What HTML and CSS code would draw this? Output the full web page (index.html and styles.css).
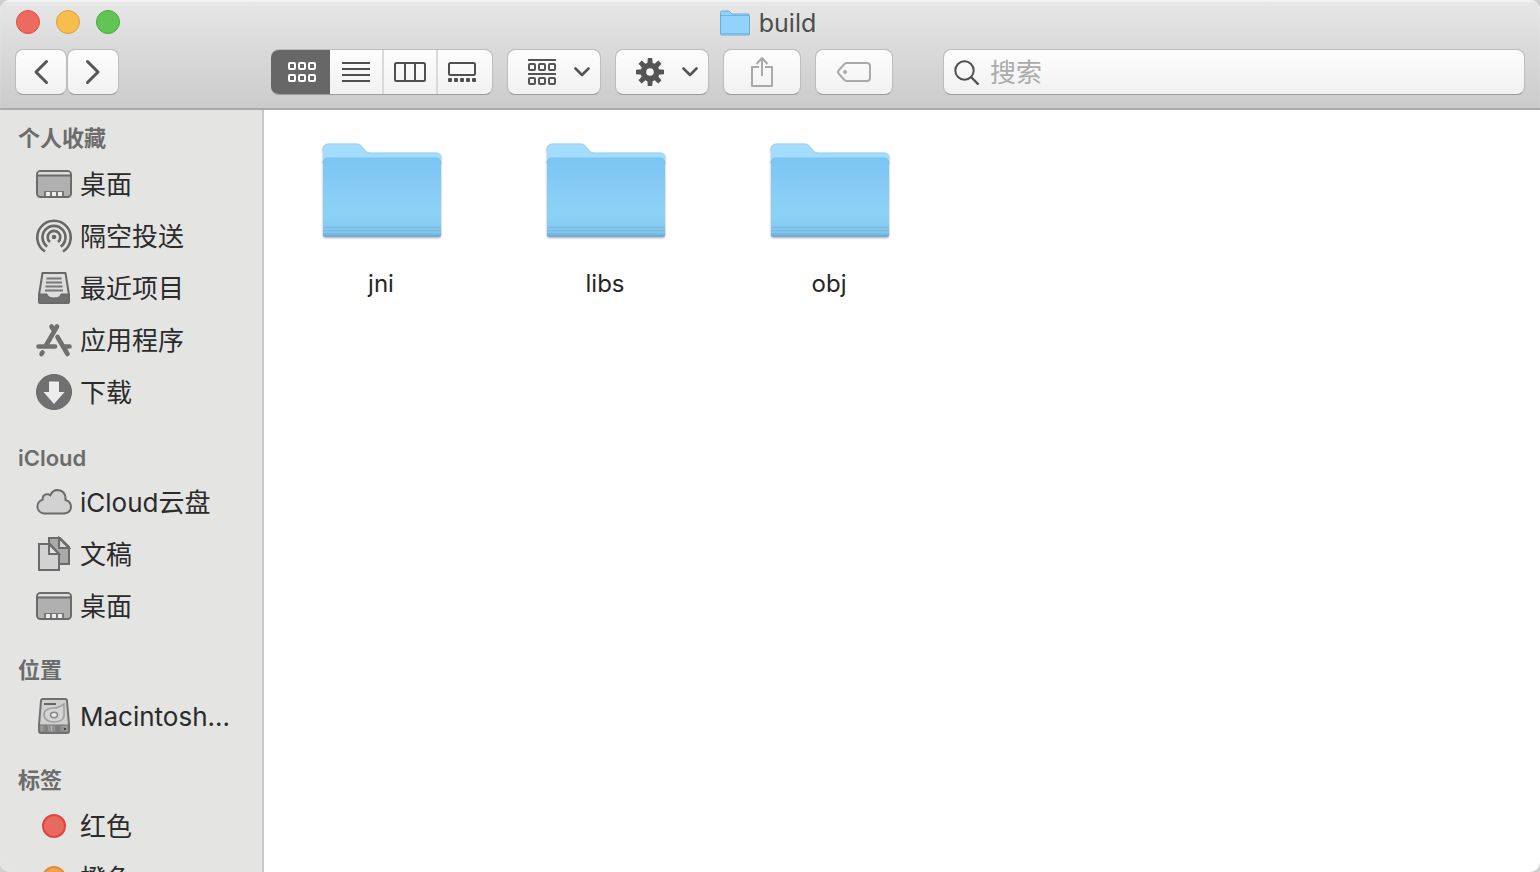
FILE: index.html
```html
<!DOCTYPE html>
<html lang="zh-CN">
<head>
<meta charset="utf-8">
<title>build</title>
<meta name="viewport" content="width=device-width, initial-scale=1">
<link rel="stylesheet" href="styles.css">
</head>
<body>
<svg class="defs" aria-hidden="true">
  <defs>
    <linearGradient id="front" x1="0" y1="0" x2="0" y2="1">
      <stop offset="0" stop-color="#7cc6f3"/><stop offset=".45" stop-color="#87cdf7"/><stop offset=".72" stop-color="#8dd2f5"/><stop offset=".86" stop-color="#85cbf0"/><stop offset="1" stop-color="#7dc2ea"/>
    </linearGradient>
    <linearGradient id="drive" x1="0" x2="1">
      <stop offset="0" stop-color="#aaa"/><stop offset=".2" stop-color="#808080"/><stop offset=".4" stop-color="#bbb"/><stop offset=".6" stop-color="#808080"/><stop offset="1" stop-color="#a5a5a5"/>
    </linearGradient>
    <symbol id="folder" viewBox="0 0 120 98">
      <path d="M1 93V6q0-5 5-5H35q3 0 5 3l3 4q2 2 5 2h66q5 0 5 5v78z" fill="#a3dcfd"/>
      <path d="M1 8q0-7 6-7H35q3 0 5 3l3 4q2 2 5 2h66q5 0 5 5" fill="none" stroke="#97d3f6" stroke-width="1"/>
      <path d="M1 20q0-5 5-5h108q5 0 5 5v71q0 3-3 3H4q-3 0-3-3z" fill="url(#front)"/>
      <path d="M1 20q0-5 5-5h108q5 0 5 5" fill="none" stroke="#7bc3ef"/>
      <path d="M1 84.500h118M1 87.500h118M1 90.500h118" stroke="#76b9e2"/>
      <path d="M1 91.500q0 2.500 3 2.500h112q3 0 3-2.500" fill="#6caedb"/>
    </symbol>
    <symbol id="desktop" viewBox="0 0 36 36">
      <rect x="1" y="5" width="34" height="26" rx="3.500" fill="#b0b0b0" stroke="#6b6b6b" stroke-width="2"/>
      <path d="M2 8q0-2 2-2h28q2 0 2 2v1H2z" fill="#dedede"/>
      <path d="M2 9.500h32" stroke="#6b6b6b" stroke-width="2"/>
      <path d="M8 30v-5h20v5z" fill="#777"/>
      <path d="M10 26h4v4h-4zM16 26h4v4h-4zM22 26h4v4h-4z" fill="#eee"/>
    </symbol>
    <symbol id="chevron" viewBox="0 0 16 10"><path d="M1.500 1.500 8 8l6.500-6.500" fill="none" stroke="#555" stroke-width="2.600" stroke-linecap="round" stroke-linejoin="round"/></symbol>
  </defs>
</svg>
<div class="window">
  <header class="titlebar">
    <div class="title-row">
      <div class="lights">
        <button class="light close" aria-label="关闭"></button>
        <button class="light minimize" aria-label="最小化"></button>
        <button class="light maximize" aria-label="缩放"></button>
      </div>
      <h1 class="title"><svg class="title-folder" viewBox="0 0 30 26" aria-hidden="true"><path d="M.5 24V2.500Q.5 1 2 1h7l3 3h16q1.500 0 1.500 1.500V24q0 1-1 1h-27q-1 0-1-1z" fill="#91d3fa" stroke="#67aedb"/><path d="M1 5.500h28" stroke="#70b6e2"/><path d="M1 23.500h28" stroke="#75bbe6"/></svg>build</h1>
    </div>
    <div class="toolbar">
      <div class="nav">
        <button class="btn nav-btn" aria-label="后退"><svg width="16" height="26" viewBox="0 0 16 26"><path d="M13.500 2.500 3 13l10.500 10.500" fill="none" stroke="#555" stroke-width="3" stroke-linecap="round" stroke-linejoin="round"/></svg></button>
        <button class="btn nav-btn" aria-label="前进"><svg width="16" height="26" viewBox="0 0 16 26"><path d="M2.500 2.500 13 13 2.500 23.500" fill="none" stroke="#555" stroke-width="3" stroke-linecap="round" stroke-linejoin="round"/></svg></button>
      </div>
      <div class="segments" role="group" aria-label="显示方式">
        <button class="segment active" aria-label="图标" aria-pressed="true"><svg width="28" height="20" viewBox="0 0 28 20"><g fill="none" stroke="#fff" stroke-width="2"><rect x="1" y="1" width="6" height="6" rx="1"/><rect x="11" y="1" width="6" height="6" rx="1"/><rect x="21" y="1" width="6" height="6" rx="1"/><rect x="1" y="13" width="6" height="6" rx="1"/><rect x="11" y="13" width="6" height="6" rx="1"/><rect x="21" y="13" width="6" height="6" rx="1"/></g></svg></button>
        <button class="segment" aria-label="列表" aria-pressed="false"><svg width="28" height="20" viewBox="0 0 28 20"><path d="M0 1h28M0 7h28M0 13h28M0 19h28" stroke="#4f4f4f" stroke-width="2"/></svg></button>
        <button class="segment" aria-label="分栏" aria-pressed="false"><svg width="32" height="20" viewBox="0 0 32 20"><g fill="none" stroke="#4f4f4f" stroke-width="2"><rect x="1" y="1" width="30" height="18" rx="1.500"/><path d="M11 1v18M21 1v18"/></g></svg></button>
        <button class="segment last" aria-label="画廊" aria-pressed="false"><svg width="28" height="20" viewBox="0 0 28 20"><rect x="1" y="1" width="26" height="12" rx="1.500" fill="none" stroke="#4f4f4f" stroke-width="2"/><g fill="#4f4f4f"><rect y="16" width="4" height="4" rx="1"/><rect x="6" y="16" width="4" height="4" rx="1"/><rect x="12" y="16" width="4" height="4" rx="1"/><rect x="18" y="16" width="4" height="4" rx="1"/><rect x="24" y="16" width="4" height="4" rx="1"/></g></svg></button>
      </div>
      <button class="btn menu-btn" aria-label="分组"><svg width="28" height="26" viewBox="0 0 28 26"><path d="M0 1h28M0 15h28" stroke="#555" stroke-width="2"/><g fill="none" stroke="#555" stroke-width="2"><rect x="1" y="5" width="6" height="6" rx="1"/><rect x="11" y="5" width="6" height="6" rx="1"/><rect x="21" y="5" width="6" height="6" rx="1"/><rect x="1" y="19" width="6" height="6" rx="1"/><rect x="11" y="19" width="6" height="6" rx="1"/><rect x="21" y="19" width="6" height="6" rx="1"/></g></svg><svg width="16" height="10"><use href="#chevron"/></svg></button>
      <button class="btn menu-btn" aria-label="操作"><svg width="28" height="28" viewBox="-14 -14 28 28"><g fill="#555"><path id="tooth" d="M-2.700-8-2.200-14H2.200L2.700-8V8L2.200 14H-2.200L-2.700 8z"/><use href="#tooth" transform="rotate(45)"/><use href="#tooth" transform="rotate(90)"/><use href="#tooth" transform="rotate(135)"/><circle r="9.500"/></g><circle r="3.800" fill="#f6f6f6"/></svg><svg width="16" height="10"><use href="#chevron"/></svg></button>
      <button class="btn action-btn" aria-label="共享"><svg width="22" height="30" viewBox="0 0 22 30"><path d="M8 10H1v19h20V10h-7M11 19V1.500M5.500 7 11 1l5.500 6" fill="none" stroke="#a9a9a9" stroke-width="2" stroke-linejoin="round" stroke-linecap="butt"/></svg></button>
      <button class="btn action-btn" aria-label="编辑标签"><svg width="34" height="20" viewBox="0 0 34 20"><path d="M10 1h20q3 0 3 3v12q0 3-3 3H10q-1.500 0-2.500-1L2 12q-2-2 0-4L7.500 2q1-1 2.500-1z" fill="none" stroke="#a9a9a9" stroke-width="2"/><circle cx="8" cy="10" r="2" fill="#a9a9a9"/></svg></button>
      <label class="search"><svg width="26" height="26" viewBox="0 0 26 26" aria-hidden="true"><circle cx="10.500" cy="11.500" r="9.200" fill="none" stroke="#505050" stroke-width="2"/><path d="m17 18 7.500 7.500" stroke="#505050" stroke-width="2.400"/></svg><input type="search" placeholder="搜索" aria-label="搜索"></label>
    </div>
  </header>
  <div class="body">
    <nav class="sidebar" aria-label="边栏">
      <section>
        <h2>个人收藏</h2>
        <ul>
          <li><a href="#"><svg class="icon"><use href="#desktop"/></svg>桌面</a></li>
          <li><a href="#"><svg class="icon" viewBox="0 0 36 36"><g fill="none" stroke="#686868" stroke-width="2.600"><path d="M9 33.500A16.700 16.700 0 1 1 27 33.500"/><path d="M11.200 28.600A11.500 11.500 0 1 1 24.800 28.600"/><path d="M14 24A6.300 6.300 0 1 1 22 24"/></g><circle cx="18" cy="19" r="2.300" fill="#686868"/></svg>隔空投送</a></li>
          <li><a href="#"><svg class="icon" viewBox="0 0 36 36"><path d="M6.500 3h23L33 25v7q0 1-1 1H4q-1 0-1-1v-7z" fill="#ddd" stroke="#686868" stroke-width="2" stroke-linejoin="round"/><path d="M10.500 8.500h15M10 12.500h16M9.500 16.500h17M9 20.500h18" stroke="#777" stroke-width="2"/><path d="M3 24h8q1 4 7 4t7-4h8v8q0 1-1 1H4q-1 0-1-1z" fill="#707070" stroke="#686868"/></svg>最近项目</a></li>
          <li><a href="#"><svg class="icon" viewBox="0 0 36 36"><g fill="none" stroke="#707070" stroke-width="4.600" stroke-linecap="round"><path d="M21 4.500 10 23.500M6.500 30.500 5.500 32M15.500 4.500l1.500 2.500M2.500 24.500h16.500M29 24.500h4.500"/><path d="m21.500 15 10 17"/></g></svg>应用程序</a></li>
          <li><a href="#"><svg class="icon" viewBox="0 0 36 36"><circle cx="18" cy="18" r="17.500" fill="#707070" stroke="#686868"/><path d="M13 7.500h10v10.500h5.500L18 30 7.500 18H13z" fill="#ececec"/></svg>下载</a></li>
        </ul>
      </section>
      <section>
        <h2 class="latin">iCloud</h2>
        <ul>
          <li><a href="#"><svg class="icon" viewBox="0 0 36 36"><path d="M8 29.500a7 7 0 0 1-1.500-13.700Q6.500 10.500 11 10.300q2-.1 3.300 1Q16.500 6 21.500 6q8.500.5 8 10Q35 17.500 35 23q-.5 6-7 6.500z" fill="#d2d2d2" stroke="#6b6b6b" stroke-width="2"/></svg>iCloud云盘</a></li>
          <li><a href="#"><svg class="icon" viewBox="0 0 36 36"><g stroke="#6b6b6b" stroke-width="2"><path d="M13 2h11l9 9v17H13z" fill="#aaa"/><path d="M23 2v10h10z" fill="#d8d8d8"/><path d="M3 8h11l9 10v16H3z" fill="#d2d2d2"/><path d="M13 8v10h10z" fill="#e2e2e2"/></g></svg>文稿</a></li>
          <li><a href="#"><svg class="icon"><use href="#desktop"/></svg>桌面</a></li>
        </ul>
      </section>
      <section>
        <h2>位置</h2>
        <ul>
          <li><a class="latin" href="#"><svg class="icon" viewBox="0 0 36 36"><path d="M5 3q0-2 2-2h22q2 0 2 2l2 24v6q0 2-2 2H5q-2 0-2-2v-6z" fill="#d0d0d0" stroke="#707070" stroke-width="2"/><path d="M4 27h28v7H4z" fill="url(#drive)" stroke="#777"/><path d="M11 28v5M14 28v5M17 28v5M20 28v5M23 28v5" stroke="#777"/><path d="M8 6h12" stroke="#666" stroke-width="2"/><path d="M28 6v11c0 5-5 7-10 7-6 0-10-3-10-7 0-5 4-7 10-7 4 0 6-1 10-4z" fill="#d4d4d4" stroke="#a0a0a0" stroke-width="1.600"/><ellipse cx="18" cy="17" rx="3.500" ry="2.700" fill="#e8e8e8" stroke="#888" stroke-width="1.500"/><circle cx="29" cy="31" r="1.200" fill="#444"/></svg>Macintosh...</a></li>
        </ul>
      </section>
      <section>
        <h2>标签</h2>
        <ul>
          <li><a href="#"><span class="icon"><span class="tag red"></span></span>红色</a></li>
          <li><a href="#"><span class="icon"><span class="tag orange"></span></span>橙色</a></li>
        </ul>
      </section>
    </nav>
    <main class="files">
      <a class="file" href="#"><svg class="folder" aria-hidden="true"><use href="#folder"/></svg><span class="file-name">jni</span></a>
      <a class="file" href="#"><svg class="folder" aria-hidden="true"><use href="#folder"/></svg><span class="file-name">libs</span></a>
      <a class="file" href="#"><svg class="folder" aria-hidden="true"><use href="#folder"/></svg><span class="file-name">obj</span></a>
    </main>
  </div>
</div>
</body>
</html>
```
FILE: styles.css
```css
* { box-sizing: border-box; }
body {
  margin: 0;
  background: #d0d0d0;
  font-family: Inter, "Noto Sans CJK SC", sans-serif;
}
button { margin: 0; padding: 0; border: 0; font: inherit; }
a { color: inherit; text-decoration: none; }
h1, h2, ul { margin: 0; padding: 0; list-style: none; }
svg { display: block; flex: none; }
.defs { position: absolute; width: 0; height: 0; }

.window {
  display: flex;
  flex-direction: column;
  height: 100vh;
  overflow: hidden;
  border-radius: 10px;
  background: #fff;
}

.titlebar {
  flex: none;
  background: linear-gradient(#e7e7e7, #cbcbcb);
  border-bottom: 2px solid #aaa;
  box-shadow: inset 0 2px 1px #f2f2f2;
}
.title-row {
  display: grid;
  grid-template-columns: 1fr auto 1fr;
  align-items: center;
  height: 44px;
  padding: 0 20px 0 16px;
}
.lights { display: flex; gap: 16px; }
.light { width: 24px; height: 24px; border-radius: 50%; border: 1px solid; }
.close { background: #ee6a5f; border-color: #dc4f45; }
.minimize { background: #f5be4f; border-color: #dba03a; }
.maximize { background: #61c454; border-color: #4aa73c; }
.title {
  display: flex;
  align-items: center;
  gap: 9px;
  padding-top: 2px;
  color: #4d4d4d;
  font-size: 25px;
  font-weight: 400;
}
.title-folder { width: 30px; height: 26px; }

.toolbar {
  display: flex;
  align-items: center;
  gap: 14px;
  padding: 5px 15px 13px;
}
.btn, .search, .segments {
  height: 46px;
  border-radius: 8px;
  border: 1px solid #bdbdbd;
  border-bottom-color: #9d9d9d;
  background: linear-gradient(#fdfdfd, #f1f1f1);
  background-clip: padding-box;
}
.btn { display: flex; align-items: center; justify-content: center; }
.nav { display: flex; width: 242px; }
.nav-btn { width: 52px; }
.segments { display: flex; width: 222px; overflow: hidden; border-left: 0; }
.segment {
  display: flex;
  flex: 0 0 54px;
  align-items: center;
  justify-content: center;
  background: none;
  border-left: 2px solid #d9d9d9;
}
.segment.active { flex-basis: 59px; margin: -1px 0; background: #676767; border: 0; padding-left: 3px; }
.segment.active + .segment { flex-basis: 52px; border: 0; }
.segment.last { flex: 1; padding-right: 6px; }
.menu-btn { width: 94px; gap: 18px; padding-left: 10px; }
.action-btn { width: 78px; }
.search {
  display: flex;
  flex: 1;
  align-items: center;
  gap: 10px;
  margin-left: 36px;
  padding: 0 10px;
}
.search input {
  flex: 1;
  min-width: 0;
  padding: 0;
  border: 0;
  outline: 0;
  background: none;
  color: #333;
  font: inherit;
  font-size: 26px;
}
.search input::placeholder { color: #ababab; }

.body { display: flex; flex: 1; min-height: 0; }
.sidebar {
  flex: none;
  width: 264px;
  padding-top: 8px;
  overflow: hidden;
  background: #e4e4e3;
  border-right: 2px solid #c8c8c8;
}
section { margin-bottom: 18px; }
.sidebar h2 {
  height: 40px;
  padding-left: 18px;
  color: #6c6c6c;
  font-size: 22px;
  font-weight: 600;
  line-height: 40px;
}
.sidebar h2.latin { padding-top: 2px; }
.sidebar a {
  display: flex;
  align-items: center;
  gap: 8px;
  height: 52px;
  padding: 0 0 3px 36px;
  color: #2b2b2b;
  font-size: 26px;
  white-space: nowrap;
}
.icon { display: flex; flex: none; align-items: center; justify-content: center; width: 36px; height: 36px; margin-top: 3px; }
.sidebar a.latin { padding-bottom: 0; }
.latin .icon { margin-top: 0; }
.tag { width: 24px; height: 24px; border: 2px solid; border-radius: 50%; }
.red { background: #e9695f; border-color: #e0473c; }
.orange { background: #f0a250; border-color: #e58c34; }

.files {
  display: grid;
  flex: 1;
  grid-template-columns: repeat(auto-fill, 224px);
  align-content: start;
  padding: 33px 6px;
}
.file {
  display: flex;
  flex-direction: column;
  align-items: center;
  gap: 27px;
  color: #262626;
  font-size: 24px;
  line-height: 32px;
}
.file-name { padding-right: 2px; }
.folder { width: 120px; height: 98px; filter: drop-shadow(0 1px 1px #0005); }
```
